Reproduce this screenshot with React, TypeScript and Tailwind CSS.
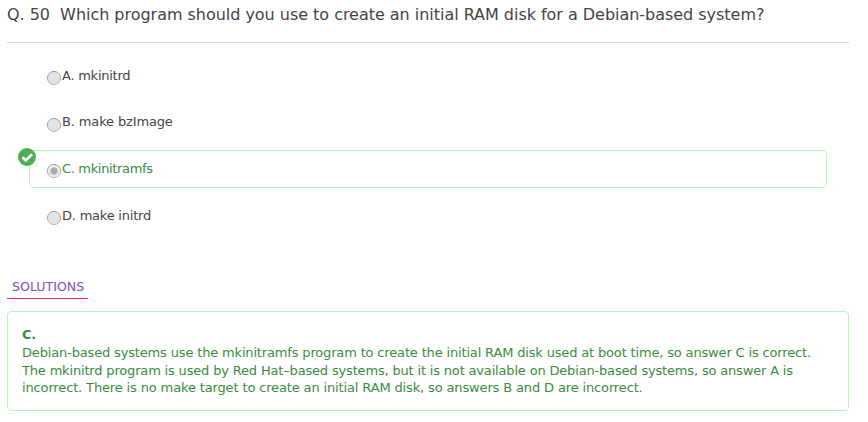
const options = [
  { id: 'A', label: 'mkinitrd', pitch: 'h-[46px]', tracking: 'tracking-[-0.25px]', radio: 'mt-[3px]' },
  { id: 'B', label: 'make bzImage', pitch: 'h-[47px]', tracking: 'tracking-[-0.14px]', radio: 'mt-[4px]' },
  { id: 'C', label: 'mkinitramfs', pitch: 'h-[47px]', tracking: 'tracking-[-0.34px]', radio: 'mt-[3px]', correct: true },
  { id: 'D', label: 'make initrd', pitch: 'h-[47px]', tracking: 'tracking-[-0.22px]', radio: 'mt-[3px]' },
];

const solution = [
  {
    text: 'Debian-based systems use the mkinitramfs program to create the initial RAM disk used at boot time, so answer C is correct.',
    tracking: 'tracking-[-0.16px]',
  },
  {
    text: 'The mkinitrd program is used by Red Hat–based systems, but it is not available on Debian-based systems, so answer A is',
    tracking: 'tracking-[-0.17px]',
  },
  {
    text: 'incorrect. There is no make target to create an initial RAM disk, so answers B and D are incorrect.',
    tracking: 'tracking-[-0.14px]',
  },
];

function Radio({ checked, offset }: { checked?: boolean; offset: string }) {
  return (
    <svg className={`h-[15px] w-[15px] shrink-0 ${offset}`} viewBox="0 0 15 15">
      <defs>
        <linearGradient id="rim" x1="0" y1="0" x2="0" y2="1">
          <stop offset="0" stopColor="#9c9c9c" />
          <stop offset="1" stopColor="#b8b8b8" />
        </linearGradient>
      </defs>
      <circle cx="8" cy="8" r="6.6" fill={checked ? '#eeeeee' : '#e4e4e4'} stroke="url(#rim)" strokeWidth="1" />
      {checked && <circle cx="8" cy="8" r="3.4" fill="#a9a9a9" stroke="#bcbcbc" strokeWidth="0.8" />}
    </svg>
  );
}

function CheckBadge() {
  return (
    <svg className="absolute -top-[3px] -left-[12px] h-[18px] w-[18px]" viewBox="0 0 18 18">
      <circle cx="9" cy="9" r="9" fill="#4caf50" />
      <path d="M4.5 9.2 7.8 12.4 14 6.2" fill="none" stroke="#fff" strokeWidth="2.7" />
    </svg>
  );
}

export default function App() {
  return (
    <main className="h-[422px] w-[868px] overflow-hidden bg-white pr-[19px] pl-[7px] font-['DejaVu_Sans',sans-serif] text-[13px] text-[#444]">
      <h1 className="h-[43px] border-b border-[#d9d9d9] pt-[3px] text-[16px] leading-6 tracking-[-0.028px] whitespace-pre">
        Q. 50  Which program should you use to create an initial RAM disk for a Debian-based system?
      </h1>
      <div className="mr-[22px] ml-[22px] pt-[14px]">
        {options.map(({ id, label, pitch, tracking, radio, correct }) => (
          <div key={id} className={pitch}>
            <label
              className={`relative flex h-[38px] rounded-[5px] border pt-[9px] pl-[16px] ${
                correct ? 'border-[#b5f8b9] text-[#388e3c]' : 'border-transparent'
              }`}
            >
              {correct && <CheckBadge />}
              <Radio checked={correct} offset={radio} />
              <span className={`ml-px leading-[18px] ${tracking}`}>
                {id}. {label}
              </span>
            </label>
          </div>
        ))}
      </div>
      <div className="mt-[31px] flex">
        <h2 className="h-[24px] w-[81px] border-b border-[#e91e63] pl-[5px] text-[12.6px] leading-[24px] text-[#8152b3]">
          SOLUTIONS
        </h2>
      </div>
      <section className="mt-[12px] h-[100px] rounded-[4px] border border-[#b5f8b9] pt-[14px] pl-[14px] text-[#388e3c]">
        <p className="leading-[18px] font-bold tracking-[-0.3px]">C.</p>
        {solution.map(({ text, tracking }) => (
          <p key={text} className={`leading-[17.6px] whitespace-nowrap ${tracking}`}>
            {text}
          </p>
        ))}
      </section>
    </main>
  );
}
